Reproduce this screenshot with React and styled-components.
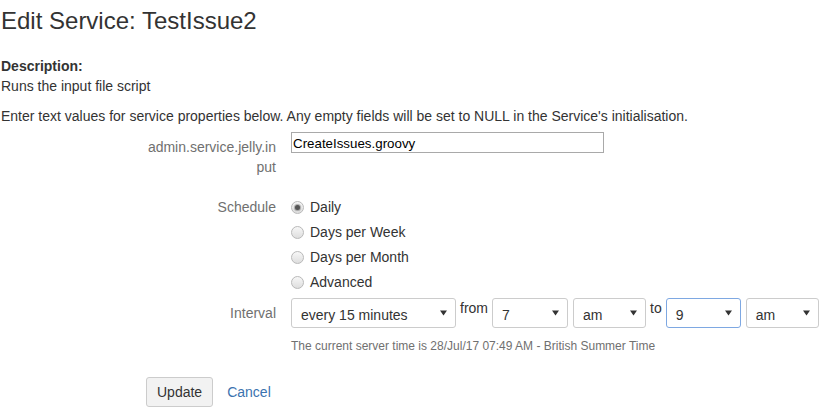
import styled, { createGlobalStyle } from "styled-components";

const GlobalStyle = createGlobalStyle`
body {
  margin: 0;
  background: #fff;
  font-family: "Liberation Sans", Arial, sans-serif;
  font-size: 14px;
  color: #333;
}
`;

const Page = styled.div`
padding: 0 0 0 1px;
`;

const Title = styled.h1`
margin: 6px 0 0;
font-size: 24px;
font-weight: normal;
line-height: 30px;
color: #333;
`;

const DescBlock = styled.div`
margin-top: 20px;
line-height: 20px;
`;

const DescLabel = styled.strong`
display: block;
font-weight: bold;
`;

const Intro = styled.p`
margin: 10px 0 0;
line-height: 20px;
`;

const Form = styled.form`
margin: 6px 0 0 145px;
`;

const FieldGroup = styled.div`
display: flex;
align-items: flex-start;
gap: 15px;
margin-top: ${(p) => p.$top || 0}px;
`;

const FieldLabel = styled.label`
flex: 0 0 130px;
width: 130px;
text-align: right;
color: #707070;
line-height: 20px;
padding-top: ${(p) => p.$pad || 0}px;
overflow-wrap: anywhere;
word-break: break-all;
`;

const TextInput = styled.input`
box-sizing: border-box;
width: 313px;
height: 21px;
margin: 0;
padding: 1px 2px 0 1px;
border: 1px solid #a9a9a9;
font-family: "Liberation Sans", Arial, sans-serif;
font-size: 13.333px;
color: #000;
outline: none;
`;

const RadioList = styled.div`
display: flex;
flex-direction: column;
gap: 5px;
`;

const RadioItem = styled.label`
display: flex;
align-items: center;
gap: 6px;
height: 20px;
line-height: 20px;
color: #333;
`;

const RadioDot = styled.span`
box-sizing: border-box;
width: 13px;
height: 13px;
border-radius: 50%;
border: 1px solid #b9b9b9;
background: linear-gradient(#f7f7f7, #dedede);
display: flex;
align-items: center;
justify-content: center;
&::after {
  content: "";
  width: 5px;
  height: 5px;
  border-radius: 50%;
  background: ${(p) => (p.$checked ? "#555" : "transparent")};
  box-shadow: ${(p) => (p.$checked ? "0 0 1px 1px rgba(80,80,80,0.45)" : "none")};
}
`;

const Controls = styled.div`
display: flex;
flex-direction: column;
`;

const IntervalRow = styled.div`
display: flex;
align-items: flex-start;
gap: 5px;
`;

const SelectBox = styled.div`
box-sizing: border-box;
width: ${(p) => p.$width}px;
height: 30px;
display: flex;
align-items: center;
justify-content: space-between;
padding: 0 8px 0 9px;
border: 1px solid ${(p) => (p.$focused ? "#7ea8e2" : "#ccc")};
border-radius: 3px;
background: #fff;
color: #333;
`;

const SelectValue = styled.span`
padding-top: 4px;
line-height: 20px;
white-space: nowrap;
`;

const Joiner = styled.span`
line-height: 20px;
color: #333;
margin: 0 ${(p) => p.$pull || 0}px 0 -1px;
`;

const Hint = styled.div`
margin-top: 10px;
font-size: 12px;
line-height: 16px;
color: #707070;
`;

const Buttons = styled.div`
display: flex;
align-items: center;
gap: 14px;
margin-top: 23px;
`;

const Button = styled.button`
box-sizing: border-box;
height: 30px;
padding: 0 10px;
border: 1px solid #ccc;
border-radius: 3px;
background: #f2f2f2;
font-family: "Liberation Sans", Arial, sans-serif;
font-size: 14px;
color: #333;
`;

const CancelLink = styled.a`
color: #3b73af;
text-decoration: none;
line-height: 20px;
`;

const Caret = () => (
  <svg width="7" height="6" viewBox="0 0 7 6">
    <path d="M0 0.5 L7 0.5 L3.5 5.5 Z" fill="#333" />
  </svg>
);

const Select = ({ value, width, focused }) => (
  <SelectBox $width={width} $focused={focused}>
    <SelectValue>{value}</SelectValue>
    <Caret />
  </SelectBox>
);

const schedules = ["Daily", "Days per Week", "Days per Month", "Advanced"];

const App = () => {
  return (
    <Page>
      <GlobalStyle />
      <Title>Edit Service: TestIssue2</Title>
      <DescBlock>
        <DescLabel>Description:</DescLabel>
        Runs the input file script
      </DescBlock>
      <Intro>
        Enter text values for service properties below. Any empty fields will be set to NULL in the Service's initialisation.
      </Intro>
      <Form onSubmit={(e) => e.preventDefault()}>
        <FieldGroup>
          <FieldLabel $pad={5}>admin.service.jelly.input</FieldLabel>
          <TextInput defaultValue="CreateIssues.groovy" />
        </FieldGroup>

        <FieldGroup $top={20}>
          <FieldLabel>Schedule</FieldLabel>
          <RadioList>
            {schedules.map((s, i) => (
              <RadioItem key={s}>
                <RadioDot $checked={i === 0} />
                {s}
              </RadioItem>
            ))}
          </RadioList>
        </FieldGroup>

        <FieldGroup $top={6}>
          <FieldLabel $pad={5}>Interval</FieldLabel>
          <Controls>
            <IntervalRow>
              <Select value="every 15 minutes" width={165} />
              <Joiner $pull={-1}>from</Joiner>
              <Select value="7" width={76} />
              <Select value="am" width={73} />
              <Joiner $pull={-1}>to</Joiner>
              <Select value="9" width={75} focused />
              <Select value="am" width={73} />
            </IntervalRow>
            <Hint>The current server time is 28/Jul/17 07:49 AM - British Summer Time</Hint>
          </Controls>
        </FieldGroup>

        <Buttons>
          <Button type="submit">Update</Button>
          <CancelLink href="#">Cancel</CancelLink>
        </Buttons>
      </Form>
    </Page>
  );
};

export default App;
